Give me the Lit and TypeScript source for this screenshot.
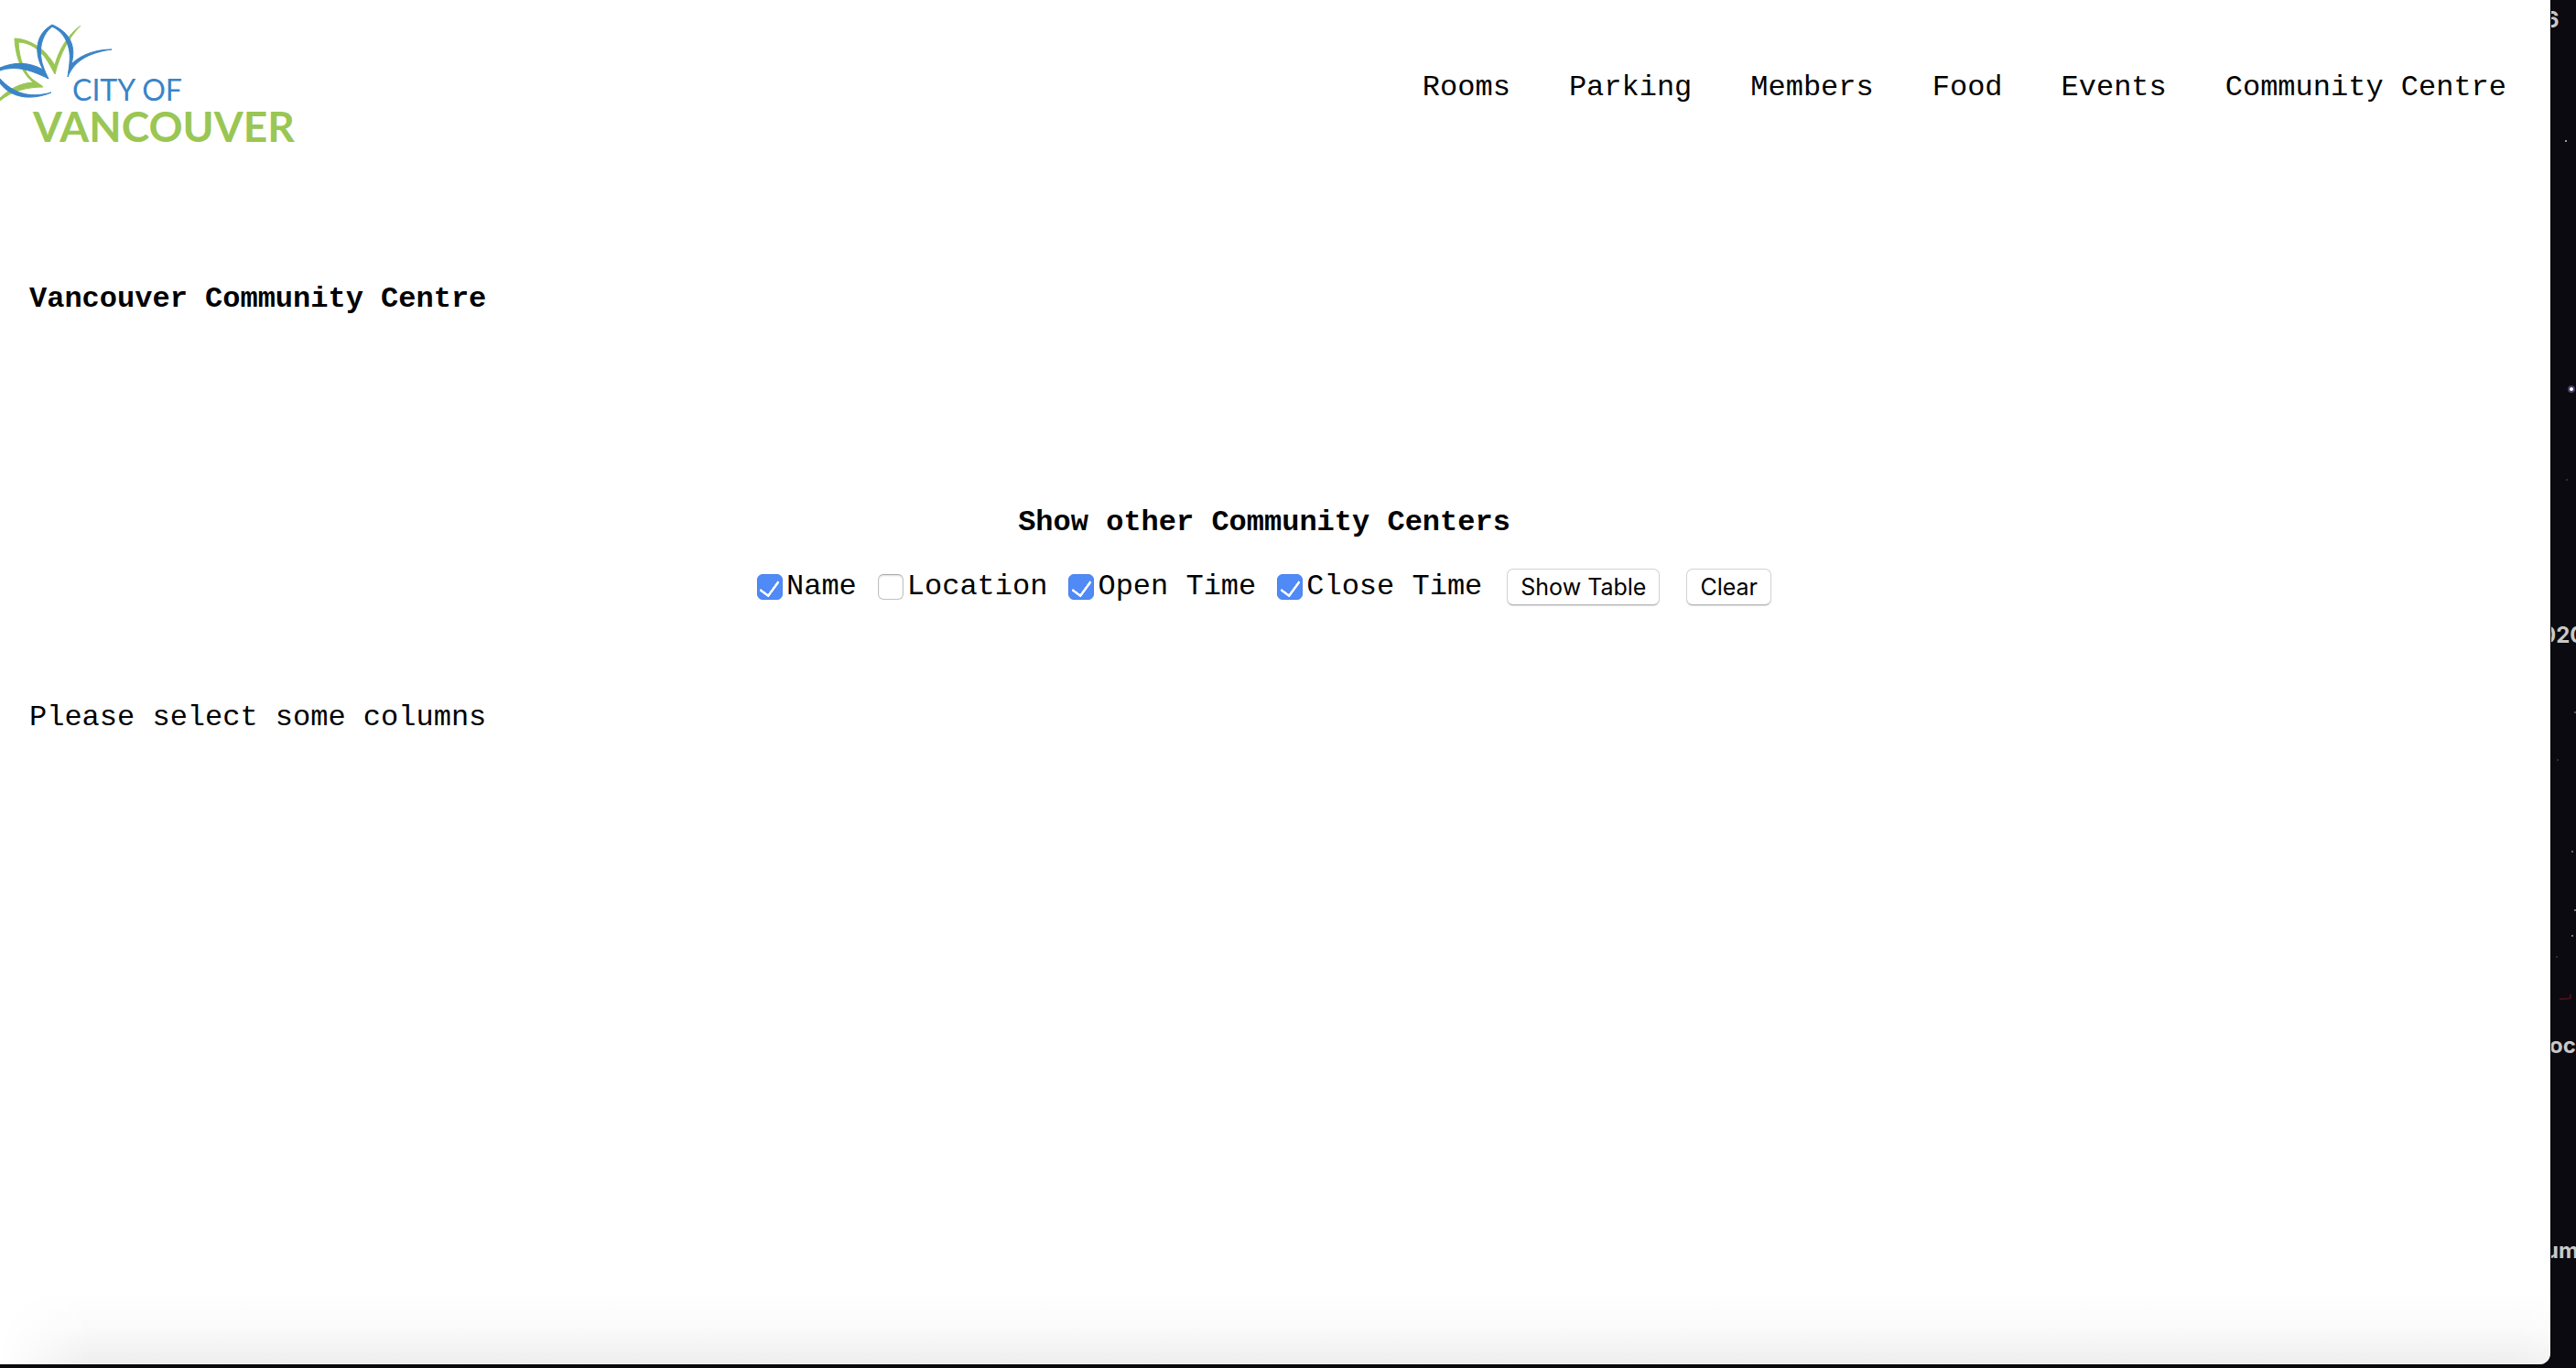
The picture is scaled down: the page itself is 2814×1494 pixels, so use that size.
import { LitElement, html, css, svg } from "lit";
import { customElement, state } from "lit/decorators.js";

const NAV = ["Rooms", "Parking", "Members", "Food", "Events", "Community Centre"];

@customElement("city-logo")
class CityLogo extends LitElement {
  static styles = css`
    :host { display: block; }
    .logo { display: block; overflow: visible; }
    .blue { fill: #3a84c8; }
    .green { fill: #9ac654; }
    path.blue { stroke: #3a84c8; }
    path.green { stroke: #9ac654; }
    .city { font: 32px/32px Lato, "Open Sans", sans-serif; }
    .van { font: bold 46px/46px Lato, "Open Sans", sans-serif; }
  `;
  render() {
    return html`<svg class="logo" width="340" height="180" viewBox="0 0 340 180" role="img" aria-label="City of Vancouver">
      ${svg`
        <path class="green" fill-rule="evenodd" d="M46 94C42 93 40 92 37 90C25 82 17 64 16 42C28 42 45 50 54 63C57 66 58 69 60 71C64 55 74 38 88 28C76 40 66 57 60 81C55 72 51 64 46 59C39 51 29 46 20 46C21 65 27 80 36 87C40 90 43 92 46 94Z"/>
        <path class="green" d="M47 95C30 95 13 99 0 110V107C12 96 22 91 36 90L30 83Z"/>
        <path class="blue" fill-rule="evenodd" d="M53 86C35 77 18 71 0 77V74C17 67 32 68 47 76C38 60 37 38 57 27C78 36 83 52 78 70C88 60 104 54 122 54C101 57 82 64 74 84C75 75 78 63 75 52C72 41 67 34 57 29C44 39 42 57 47 72C49 78 51 82 53 86Z"/>
        <path class="blue" d="M0 86C14 101 31 108 56 101C37 109 14 109 0 91Z"/>`}
      <text class="blue city" x="79" y="110">CITY OF</text>
      <text class="green van" x="36" y="155">VANCOUVER</text>
    </svg>`;
  }
}

@customElement("app-root")
class AppRoot extends LitElement {
  static styles = css`
    * { box-sizing: border-box; }
    :host {
      display: block;
      color: #000;
      font: 32px/36px "Liberation Mono", monospace;
    }
    .desktop {
      display: flex;
      position: relative;
      min-height: 100vh;
      padding: 0 28px 4px 0;
      background: #0b0a10;
      overflow: hidden;
    }
    .page {
      position: relative;
      flex: 1;
      min-width: 0;
      background: #fff;
      border-bottom-right-radius: 12px;
      box-shadow: 0 0 0 1px #000;
      overflow: hidden;
    }
    .shade {
      position: absolute;
      inset: auto 0 0 0;
      height: 80px;
      background: linear-gradient(to bottom, #fff, #fafafa 50%, #eee);
      mask-image: linear-gradient(to right, transparent, #000 100px, #000 calc(100% - 40px), rgb(0 0 0 / 70%));
    }
    .top { display: flex; justify-content: space-between; height: 180px; padding-right: 48px; }
    .nav { display: flex; gap: 64px; padding-top: 78px; }
    .nav a { color: inherit; text-decoration: none; white-space: nowrap; }
    h1, h2, p { margin: 0; font-size: 32px; }
    h1 { padding: 129px 32px 0; }
    .picker { display: flex; flex-direction: column; align-items: center; gap: 32px; padding: 208px 24px 0 0; }
    .row { display: flex; align-items: center; }
    label { display: flex; align-items: center; gap: 4px; margin-right: 23px; white-space: nowrap; }
    input {
      appearance: none;
      width: 28px;
      height: 28px;
      margin: 0;
      border: 1px solid #c2c2c2;
      border-top-color: #a9a9a9;
      border-radius: 6px;
      background: #fff;
      box-shadow: inset 0 1px 2px #0002;
      display: grid;
      place-content: start center;
    }
    input:checked { border-color: #4a82ee; background: #4f8af6; box-shadow: none; }
    input:checked::before {
      content: "";
      width: 10px;
      height: 18px;
      margin-top: 2px;
      border: solid #fff;
      border-width: 0 3px 3px 0;
      border-radius: 2px;
      transform: rotate(36deg);
    }
    button {
      height: 40px;
      margin: 0 29px 0 4px;
      padding: 0 14px;
      border: 1px solid #d2d2d2;
      border-bottom-color: #b4b4b4;
      border-radius: 7px;
      background: #fff;
      box-shadow: 0 1px 1px #0002;
      color: #000;
      font: 25px/36px Inter, sans-serif;
    }
    button + button { margin: 0; }
    .status { padding: 105px 32px 0; }
    .sky { position: absolute; inset: 0 0 0 auto; width: 28px; height: 100%; overflow: hidden; }
    .sky text { font: 700 24px Inter, sans-serif; fill: #c8c8c8; }
  `;

  @state() private columns = [
    { label: "Name", on: true },
    { label: "Location", on: false },
    { label: "Open Time", on: true },
    { label: "Close Time", on: true },
  ];

  private toggle(i: number, on: boolean) {
    this.columns = this.columns.map((c, n) => (n === i ? { ...c, on } : c));
  }

  render() {
    return html`<div class="desktop">
      <svg class="sky" aria-hidden="true">
        <text x="-6" y="30">6</text>
        <text x="-10" y="702">020</text>
        <text x="-1" y="1150">ocr</text>
        <text x="-6" y="1374">ums</text>
        <g fill="#fff">
          <circle cx="23" cy="425" r="4" fill="#8078c0" opacity=".5"/><circle cx="23" cy="425" r="2"/>
          <circle cx="17" cy="154" r="1" opacity=".8"/><circle cx="18" cy="524" r="1" opacity=".2"/>
          <circle cx="27" cy="778" r="1" opacity=".4"/><circle cx="8" cy="830" r="1" opacity=".2"/>
          <circle cx="24" cy="930" r="1" opacity=".5"/><circle cx="27" cy="994" r="1" opacity=".6"/>
          <circle cx="24" cy="1022" r="1" opacity=".6"/><circle cx="7" cy="1045" r="1" opacity=".2"/>
        </g>
        <path d="M10 1091Q18 1091 22 1090V1086" fill="none" stroke="#6a141c" stroke-width="2" opacity=".6"/>
      </svg>
      <div class="page">
        <div class="shade"></div>
        <header class="top">
          <city-logo></city-logo>
          <nav class="nav">${NAV.map((n) => html`<a href="#">${n}</a>`)}</nav>
        </header>
        <main>
          <h1>Vancouver Community Centre</h1>
          <section class="picker">
            <h2>Show other Community Centers</h2>
            <div class="row">
              ${this.columns.map((c, i) => html`<label><input type="checkbox" .checked=${c.on}
                @change=${(e: Event) => this.toggle(i, (e.target as HTMLInputElement).checked)}>${c.label}</label>`)}
              <button type="button">Show Table</button>
              <button type="button">Clear</button>
            </div>
          </section>
          <p class="status">Please select some columns</p>
        </main>
      </div>
    </div>`;
  }
}
